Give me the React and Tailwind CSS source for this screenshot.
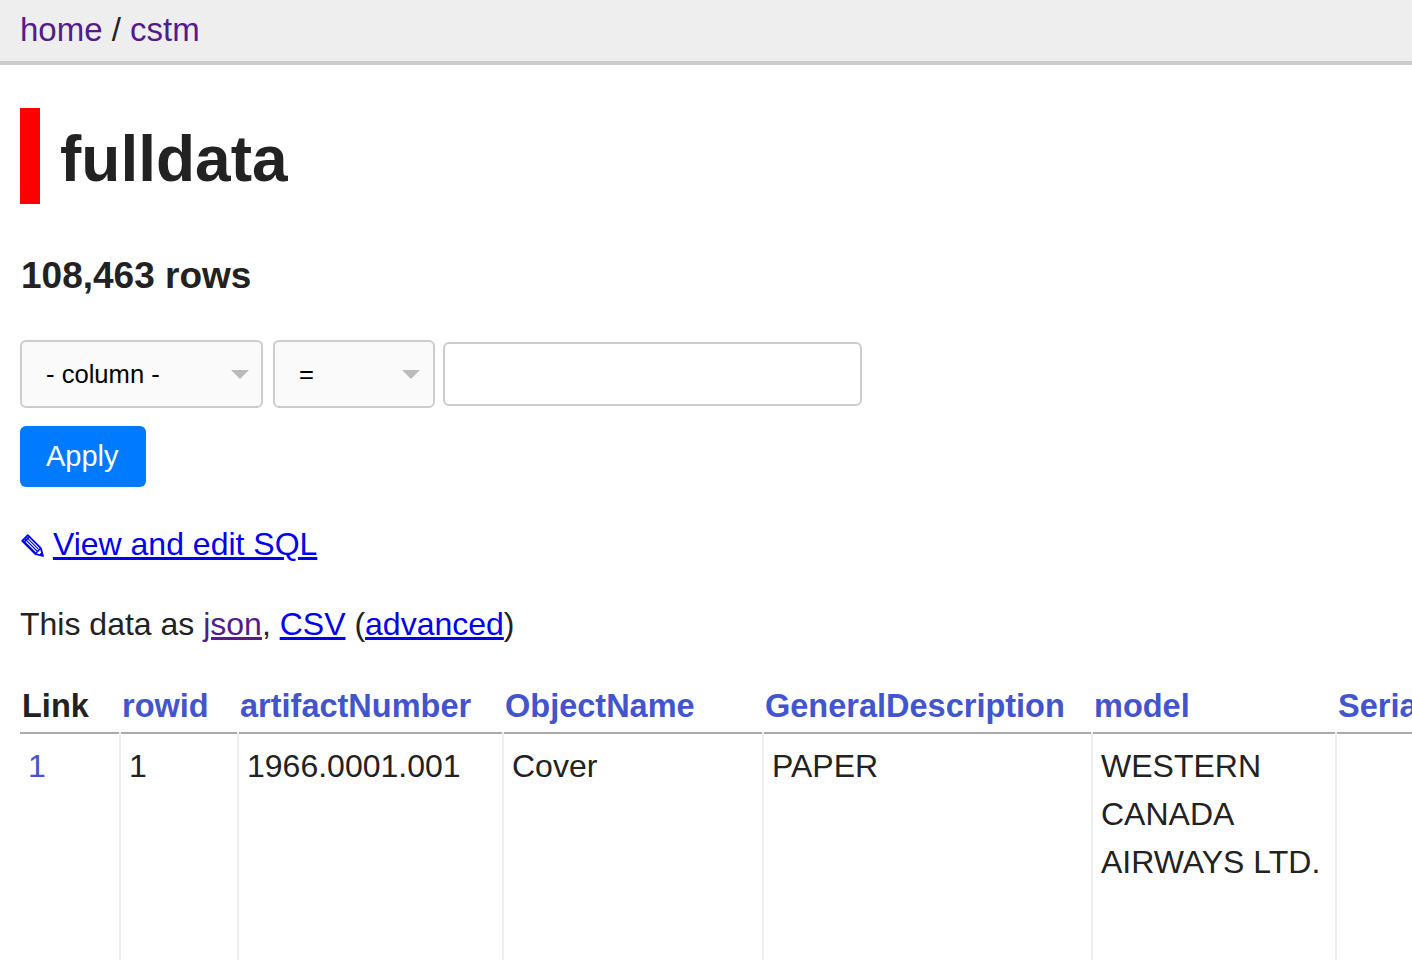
import React from 'react';

const columns = [
    { name: 'Link', width: 100, link: false },
    { name: 'rowid', width: 118, link: true },
    { name: 'artifactNumber', width: 265, link: true },
    { name: 'ObjectName', width: 260, link: true },
    { name: 'GeneralDescription', width: 329, link: true },
    { name: 'model', width: 244, link: true },
    { name: 'SerialNumber', width: 300, link: true },
];

const row = ['1', '1', '1966.0001.001', 'Cover', 'PAPER', 'WESTERN CANADA AIRWAYS LTD.', ''];

const Arrow = () => (
    <svg width="18" height="9" viewBox="0 0 18 9" className="shrink-0">
        <path d="M0 0 L18 0 L9 9 Z" fill="#bbb" />
    </svg>
);

// pencil glyph, outlined with hatching like the system one
const Pencil = () => (
    <svg width="24" height="26" viewBox="0 0 24 26" className="inline-block align-[-4px]" fill="none" stroke="#0000ee">
        <path d="M7.8 2.2 L20.8 15.2 L23 23 L15.2 20.8 L2.2 7.8 Z" strokeWidth="1.8" strokeLinejoin="round" />
        <path d="M9.4 3.8 L3.8 9.4" strokeWidth="1.6" />
        <path d="M20.8 15.2 L15.2 20.8" strokeWidth="1.6" />
        <path d="M6.6 4.4 L18.6 16.4 M5 6 L17 18 M3.4 7.6 L15.4 19.6" strokeWidth="1.1" />
        <path d="M21.4 20 L22.3 22.3 L20 21.4 Z" fill="#0000ee" strokeWidth="1" />
    </svg>
);

const App = () => {
    return (
        <div
            className="h-[960px] w-[1412px] overflow-hidden bg-white text-[#222]"
            style={{ fontFamily: '"Liberation Sans", Arial, sans-serif' }}
        >
            <header className="h-[65px] border-b-4 border-[#ccc] bg-[#eee] px-[20px] pt-[6px] text-[33px] leading-[48px]">
                <a href="#" className="text-[#551a8b]">home</a>
                <span> / </span>
                <a href="#" className="text-[#551a8b]">cstm</a>
            </header>

            <main className="px-[20px]">
                <h1 className="mt-[43px] h-[96px] border-l-[20px] border-[#ff0000] pl-[20px] pt-[6px] text-[64px] font-bold leading-[90px]">
                    fulldata
                </h1>

                <h3 className="mt-[45px] pl-[1px] text-[37px] font-bold leading-[54px]">108,463 rows</h3>

                <form className="mt-[37px]">
                    <div className="flex items-center">
                        <div className="flex h-[68px] w-[243px] items-center justify-between rounded-[6px] border-2 border-[#ccc] bg-[#fafafa] pl-[24px] pr-[12px] text-[25.6px] text-black">
                            <span>- column -</span>
                            <Arrow />
                        </div>
                        <div className="ml-[10px] flex h-[68px] w-[162px] items-center justify-between rounded-[6px] border-2 border-[#ccc] bg-[#fafafa] pl-[24px] pr-[13px] text-[25.6px] text-black">
                            <span>=</span>
                            <Arrow />
                        </div>
                        <input
                            type="text"
                            className="ml-[8px] h-[64px] w-[419px] rounded-[6px] border-2 border-[#ccc] bg-white px-[12px] text-[25.6px] outline-none"
                        />
                    </div>
                    <button
                        type="button"
                        className="mt-[18px] h-[61px] w-[126px] rounded-[6px] bg-[#007bff] pl-[26px] text-left text-[29px] text-white"
                    >
                        Apply
                    </button>
                </form>

                <p className="mt-[33px] text-[32px] leading-[48px]">
                    <Pencil />{' '}
                    <a href="#" className="text-[#0000ee] underline">View and edit SQL</a>
                </p>

                <p className="mt-[32px] text-[32px] leading-[48px]">
                    This data as <a href="#" className="text-[#551a8b] underline">json</a>,{' '}
                    <a href="#" className="text-[#0000ee] underline">CSV</a> (
                    <a href="#" className="text-[#0000ee] underline">advanced</a>)
                </p>

                <table className="mt-[32px] w-[1616px] table-fixed border-collapse text-[32px] leading-[48px]">
                    <colgroup>
                        {columns.map((c) => (
                            <col key={c.name} style={{ width: c.width }} />
                        ))}
                    </colgroup>
                    <thead>
                        <tr>
                            {columns.map((c) => (
                                <th
                                    key={c.name}
                                    className="whitespace-nowrap p-[2px] pr-[32px] text-left text-[32.5px] font-bold"
                                >
                                    {c.link ? (
                                        <a href="#" className="text-[#4355cc]">{c.name}</a>
                                    ) : (
                                        c.name
                                    )}
                                </th>
                            ))}
                        </tr>
                    </thead>
                    <tbody>
                        <tr>
                            {row.map((value, i) => (
                                <td
                                    key={i}
                                    className="h-[400px] border-t-2 border-r-2 border-t-[#aaa] border-r-[#eee] p-[8px] align-top whitespace-pre-wrap"
                                >
                                    {i === 0 ? (
                                        <a href="#" className="text-[#4355cc]">{value}</a>
                                    ) : (
                                        value
                                    )}
                                </td>
                            ))}
                        </tr>
                    </tbody>
                </table>
            </main>
        </div>
    );
};

export default App;
